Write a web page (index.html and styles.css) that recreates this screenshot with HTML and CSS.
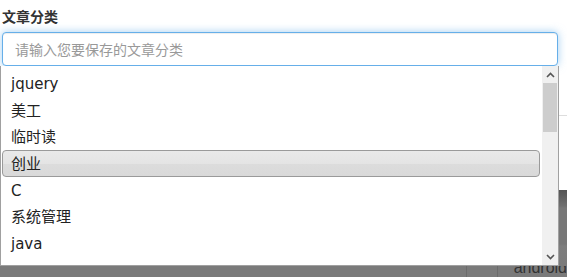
FILE: index.html
```html
<!DOCTYPE html>
<html lang="zh-CN">
<head>
    <meta charset="UTF-8">
    <title>文章分类</title>
    <link rel="stylesheet" href="styles.css">
</head>
<body>
    <div class="page">
        <div class="form-group">
            <label class="form-label">文章分类</label>
            <input class="form-input" type="text" placeholder="请输入您要保存的文章分类">
        </div>
        <div class="divider"></div>
        <div class="toolbar"></div>
        <div class="tag-row">
            <span class="tag-cell"></span>
            <span class="tag-cell"></span>
            <span class="tag-cell last">android</span>
        </div>

        <div class="dropdown">
            <ul class="dropdown-list">
                <li>jquery</li>
                <li>美工</li>
                <li>临时读</li>
                <li class="active">创业</li>
                <li>C</li>
                <li>系统管理</li>
                <li>java</li>
            </ul>
            <div class="scrollbar">
                <div class="scroll-btn">
                    <svg width="9" height="6" viewBox="0 0 9 6"><path d="M1 5 L4.5 1.5 L8 5" fill="none" stroke="#555" stroke-width="1.6"/></svg>
                </div>
                <div class="scroll-thumb"></div>
                <div class="scroll-track"></div>
                <div class="scroll-btn">
                    <svg width="9" height="6" viewBox="0 0 9 6"><path d="M1 1 L4.5 4.5 L8 1" fill="none" stroke="#555" stroke-width="1.6"/></svg>
                </div>
            </div>
        </div>
    </div>
</body>
</html>
```

FILE: styles.css
```css
* {
    margin: 0;
    padding: 0;
    box-sizing: border-box;
}
body {
    background: #fff;
    font-family: "DejaVu Sans", "Noto Sans CJK SC", sans-serif;
    color: #333;
    overflow: hidden;
}
.page {
    position: relative;
    width: 567px;
    height: 277px;
}
.form-group {
    padding: 6px 9px 0 2px;
}
.form-label {
    display: block;
    height: 20px;
    margin-bottom: 6px;
    font-size: 14px;
    line-height: 20px;
    font-weight: bold;
    font-family: "Noto Sans CJK SC", sans-serif;
    color: #333;
}
.form-input {
    display: block;
    width: 556px;
    height: 34px;
    padding: 0 12px;
    border: 1px solid #66afe9;
    border-radius: 4px;
    box-shadow: inset 0 1px 1px rgba(0,0,0,.075), 0 0 8px rgba(102,175,233,.6);
    font-size: 14px;
    font-family: "Noto Sans CJK SC", sans-serif;
    outline: none;
}
.form-input::placeholder {
    color: #999;
}
.divider {
    margin-top: 49px;
    height: 1px;
    background: #ddd;
}
.toolbar {
    margin-top: 74px;
    height: 76px;
    background: linear-gradient(#545454, #6f6f6f 16px, #777 18px, #777 54px, #7d7d7d 56px, #7b7b7b);
}
.tag-row {
    display: flex;
    height: 11px;
    background: #7a7a7a;
    overflow: hidden;
}
.tag-cell {
    border-right: 1px solid #6b6b6b;
}
.tag-cell:nth-child(1) { width: 468px; }
.tag-cell:nth-child(2) { width: 31px; }
.tag-cell.last {
    border-right: none;
    padding-left: 16px;
    font-size: 16px;
    line-height: 14px;
    margin-top: -5px;
    color: #333;
    font-family: "Liberation Sans", sans-serif;
}
.dropdown {
    position: absolute;
    top: 66px;
    left: 0;
    width: 559px;
    height: 200px;
    display: flex;
    background: #fff;
    border: 1px solid #a0a0a0;
    border-top: none;
}
.dropdown-list {
    flex: 1;
    list-style: none;
    padding: 4px 0 0 1px;
}
.dropdown-list li {
    height: 26.7px;
    line-height: 26px;
    padding-left: 8px;
    font-size: 15px;
    color: #222;
    border: 1px solid transparent;
    margin-right: 2px;
}
.dropdown-list li.active {
    border-color: #9a9a9a;
    border-radius: 4px;
    background: linear-gradient(#e9e9e9, #e4e4e4 50%, #dcdcdc 51%, #d9d9d9);
}
.scrollbar {
    width: 16px;
    display: flex;
    flex-direction: column;
    background: #f0f0f0;
}
.scroll-btn {
    height: 17px;
    display: flex;
    align-items: center;
    justify-content: center;
}
.scroll-thumb {
    height: 49px;
    margin: 0 1px;
    background: #cdcdcd;
}
.scroll-track {
    flex: 1;
}
```
